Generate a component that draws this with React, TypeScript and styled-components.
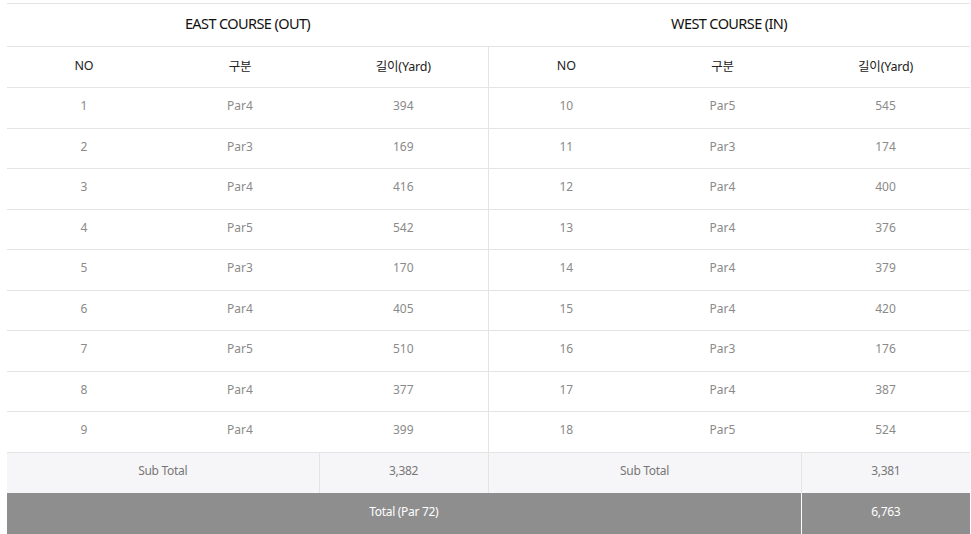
import styled, { createGlobalStyle } from "styled-components";

const GlobalStyle = createGlobalStyle`
  html, body {
    margin: 0;
    padding: 0;
    background: #fff;
  }
  body {
    font-family: "Noto Sans", "Noto Sans CJK KR", sans-serif;
  }
`;

const east = [
  ["1", "Par4", "394"],
  ["2", "Par3", "169"],
  ["3", "Par4", "416"],
  ["4", "Par5", "542"],
  ["5", "Par3", "170"],
  ["6", "Par4", "405"],
  ["7", "Par5", "510"],
  ["8", "Par4", "377"],
  ["9", "Par4", "399"],
];

const west = [
  ["10", "Par5", "545"],
  ["11", "Par3", "174"],
  ["12", "Par4", "400"],
  ["13", "Par4", "376"],
  ["14", "Par4", "379"],
  ["15", "Par4", "420"],
  ["16", "Par3", "176"],
  ["17", "Par4", "387"],
  ["18", "Par5", "524"],
];

export default function App() {
  return (
    <Wrapper>
      <GlobalStyle />
      <CourseTable>
        <colgroup>
          <col style={{ width: 154 }} />
          <col style={{ width: 158 }} />
          <col style={{ width: 169 }} />
          <col style={{ width: 156 }} />
          <col style={{ width: 157 }} />
          <col style={{ width: 169 }} />
        </colgroup>
        <thead>
          <TitleRow>
            <Title colSpan={3}>EAST COURSE (OUT)</Title>
            <Title colSpan={3}>WEST COURSE (IN)</Title>
          </TitleRow>
          <HeadRow>
            <HeadCell>NO</HeadCell>
            <HeadCell>구분</HeadCell>
            <HeadCell $divider>길이(Yard)</HeadCell>
            <HeadCell>NO</HeadCell>
            <HeadCell>구분</HeadCell>
            <HeadCell>길이(Yard)</HeadCell>
          </HeadRow>
        </thead>
        <tbody>
          {east.map((row, i) => (
            <DataRow key={i}>
              <Cell>{row[0]}</Cell>
              <Cell>{row[1]}</Cell>
              <Cell $divider>{row[2]}</Cell>
              <Cell>{west[i][0]}</Cell>
              <Cell>{west[i][1]}</Cell>
              <Cell>{west[i][2]}</Cell>
            </DataRow>
          ))}
          <SubRow>
            <SubCell colSpan={2} $divider>Sub Total</SubCell>
            <SubCell $divider>3,382</SubCell>
            <SubCell colSpan={2} $divider>Sub Total</SubCell>
            <SubCell>3,381</SubCell>
          </SubRow>
          <TotalRow>
            <TotalCell colSpan={5} $divider>Total (Par 72)</TotalCell>
            <TotalCell>6,763</TotalCell>
          </TotalRow>
        </tbody>
      </CourseTable>
    </Wrapper>
  );
}

const Wrapper = styled.div`
  padding: 3px 1px 0 7px;
  width: 971px;
  box-sizing: border-box;
`;

const CourseTable = styled.table`
  width: 963px;
  table-layout: fixed;
  border-collapse: collapse;
  border-top: 1px solid #e4e4e4;
`;

const TitleRow = styled.tr`
  height: 43px;
  border-bottom: 1px solid #e4e4e4;
`;

const Title = styled.th`
  padding: 0 0 5px;
  font-size: 14.5px;
  font-weight: 400;
  color: #111;
  letter-spacing: -0.6px;
  text-align: center;
  vertical-align: middle;
`;

const HeadRow = styled.tr`
  height: 41px;
  border-bottom: 1px solid #e4e4e4;
`;

const HeadCell = styled.th<{ $divider?: boolean }>`
  padding: 0 0 3px;
  font-size: 12.5px;
  font-weight: 400;
  color: #222;
  letter-spacing: -0.2px;
  word-spacing: 2px;
  text-align: center;
  border-right: ${(p) => (p.$divider ? "1px solid #e4e4e4" : "none")};
`;

const DataRow = styled.tr`
  height: 40.5px;
  border-bottom: 1px solid #e4e4e4;
`;

const Cell = styled.td<{ $divider?: boolean }>`
  padding: 0 0 4px;
  font-size: 12px;
  color: #8a8a8a;
  text-align: center;
  border-right: ${(p) => (p.$divider ? "1px solid #e4e4e4" : "none")};
`;

const SubRow = styled.tr`
  height: 41px;
  background: #f6f6f8;
`;

const SubCell = styled.td<{ $divider?: boolean }>`
  padding: 0 0 4px;
  font-size: 12px;
  color: #777;
  letter-spacing: -0.3px;
  text-align: center;
  border-right: ${(p) => (p.$divider ? "1px solid #e4e4e4" : "none")};
`;

const TotalRow = styled.tr`
  height: 41px;
  background: #8e8e8e;
`;

const TotalCell = styled.td<{ $divider?: boolean }>`
  padding: 0 0 4px;
  font-size: 12px;
  color: #fff;
  letter-spacing: -0.3px;
  text-align: center;
  border-right: ${(p) => (p.$divider ? "1px solid #fff" : "none")};
`;
